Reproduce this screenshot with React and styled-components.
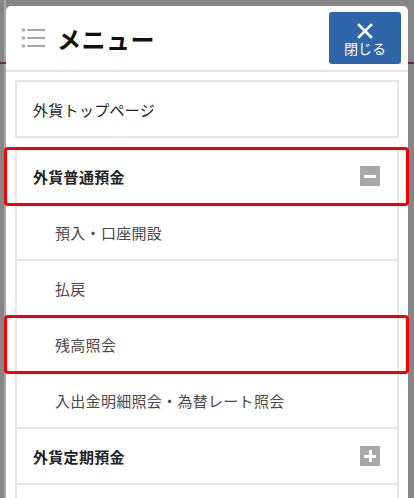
import React from 'react';
import styled, {createGlobalStyle} from "styled-components";

const GlobalStyle = createGlobalStyle`
  html, body {
    margin: 0;
    padding: 0;
    height: 100%;
    overflow: hidden;
  }
  body {
    font-family: "Noto Sans CJK JP", "Noto Sans", sans-serif;
  }
`;

const Backdrop = styled.div`
  width: 414px;
  height: 498px;
  box-sizing: border-box;
  padding: 6px 6px 0 6px;
  overflow: hidden;
  background:
    linear-gradient(to bottom, transparent 62px, #6b2456 62px, #6b2456 64px, transparent 64px),
    linear-gradient(to right, #858585 0, #858585 4px, #a8a8a8 4px, #a8a8a8 6px, #858585 6px);
`;

const Panel = styled.div`
  background: #fff;
  border-radius: 5px 5px 0 0;
  min-height: 560px;
`;

const Header = styled.header`
  display: flex;
  align-items: center;
  height: 66px;
  box-sizing: border-box;
  padding: 0 7px 0 9px;
  border-bottom: 2px solid #e5e5e5;
`;

const Title = styled.h1`
  flex: 1;
  margin: 0 0 0 10px;
  font-size: 24px;
  font-weight: 700;
  color: #111;
  letter-spacing: 0.5px;
`;

const CloseButton = styled.button`
  width: 72px;
  height: 52px;
  border: none;
  border-radius: 3px;
  background: #2e66a9;
  color: #fff;
  display: flex;
  flex-direction: column;
  align-items: center;
  justify-content: center;
  gap: 2px;
  padding: 2px 0 0;
  font-family: inherit;
  font-size: 14px;
  line-height: 1;
  cursor: pointer;
`;

const Body = styled.div`
  padding: 8px 9px 0;
  display: flex;
  flex-direction: column;
  gap: 9px;
`;

const Group = styled.div`
  border: 2px solid #e6e6e6;
  border-bottom: none;
`;

const Row = styled.div`
  position: relative;
  display: flex;
  align-items: center;
  justify-content: space-between;
  height: 56px;
  box-sizing: border-box;
  padding: 0 17px 0 ${p => p.$sub ? 38 : 16}px;
  border-bottom: 2px solid #e6e6e6;
  font-size: 15px;
  font-weight: ${p => p.$bold ? 700 : 400};
  color: ${p => p.$sub ? '#4a4a4a' : '#222'};
  letter-spacing: 0.3px;
`;

const Highlight = styled.span`
  position: absolute;
  left: -13px;
  right: -12px;
  top: -2px;
  bottom: -3px;
  border: 3px solid #f50000;
  border-radius: 4px;
  pointer-events: none;
`;

const Toggle = styled.span`
  position: relative;
  width: 20px;
  height: 20px;
  background: #a9a9a9;
  &::before, &::after {
    content: "";
    position: absolute;
    background: #fff;
  }
  &::before {
    left: 4px;
    right: 4px;
    top: 8.5px;
    height: 3px;
  }
  &::after {
    display: ${p => p.$open ? 'none' : 'block'};
    top: 4px;
    bottom: 4px;
    left: 8.5px;
    width: 3px;
  }
`;

const ListIcon = () => (
  <svg width="32" height="22" viewBox="0 0 32 22">
    {[3, 11, 19].map(y => (
      <g key={y} fill="#ababab">
        <circle cx="8.5" cy={y} r="1.8"/>
        <rect x="12" y={y - 1} width="18" height="2"/>
      </g>
    ))}
  </svg>
);

const CloseIcon = () => (
  <svg width="16" height="16" viewBox="0 0 16 16">
    <path d="M2 2 L14 14 M14 2 L2 14" stroke="#fff" strokeWidth="2.6" strokeLinecap="square"/>
  </svg>
);

const App = () => {
  return <>
    <GlobalStyle/>
    <Backdrop>
      <Panel>
        <Header>
          <ListIcon/>
          <Title>メニュー</Title>
          <CloseButton><CloseIcon/>閉じる</CloseButton>
        </Header>
        <Body>
          <Group>
            <Row>外貨トップページ</Row>
          </Group>
          <Group>
            <Row $bold>外貨普通預金<Toggle $open/><Highlight/></Row>
            <Row $sub>預入・口座開設</Row>
            <Row $sub>払戻</Row>
            <Row $sub>残高照会<Highlight/></Row>
            <Row $sub>入出金明細照会・為替レート照会</Row>
            <Row $bold>外貨定期預金<Toggle/></Row>
            <Row $bold/>
          </Group>
        </Body>
      </Panel>
    </Backdrop>
  </>
}

export default App;
